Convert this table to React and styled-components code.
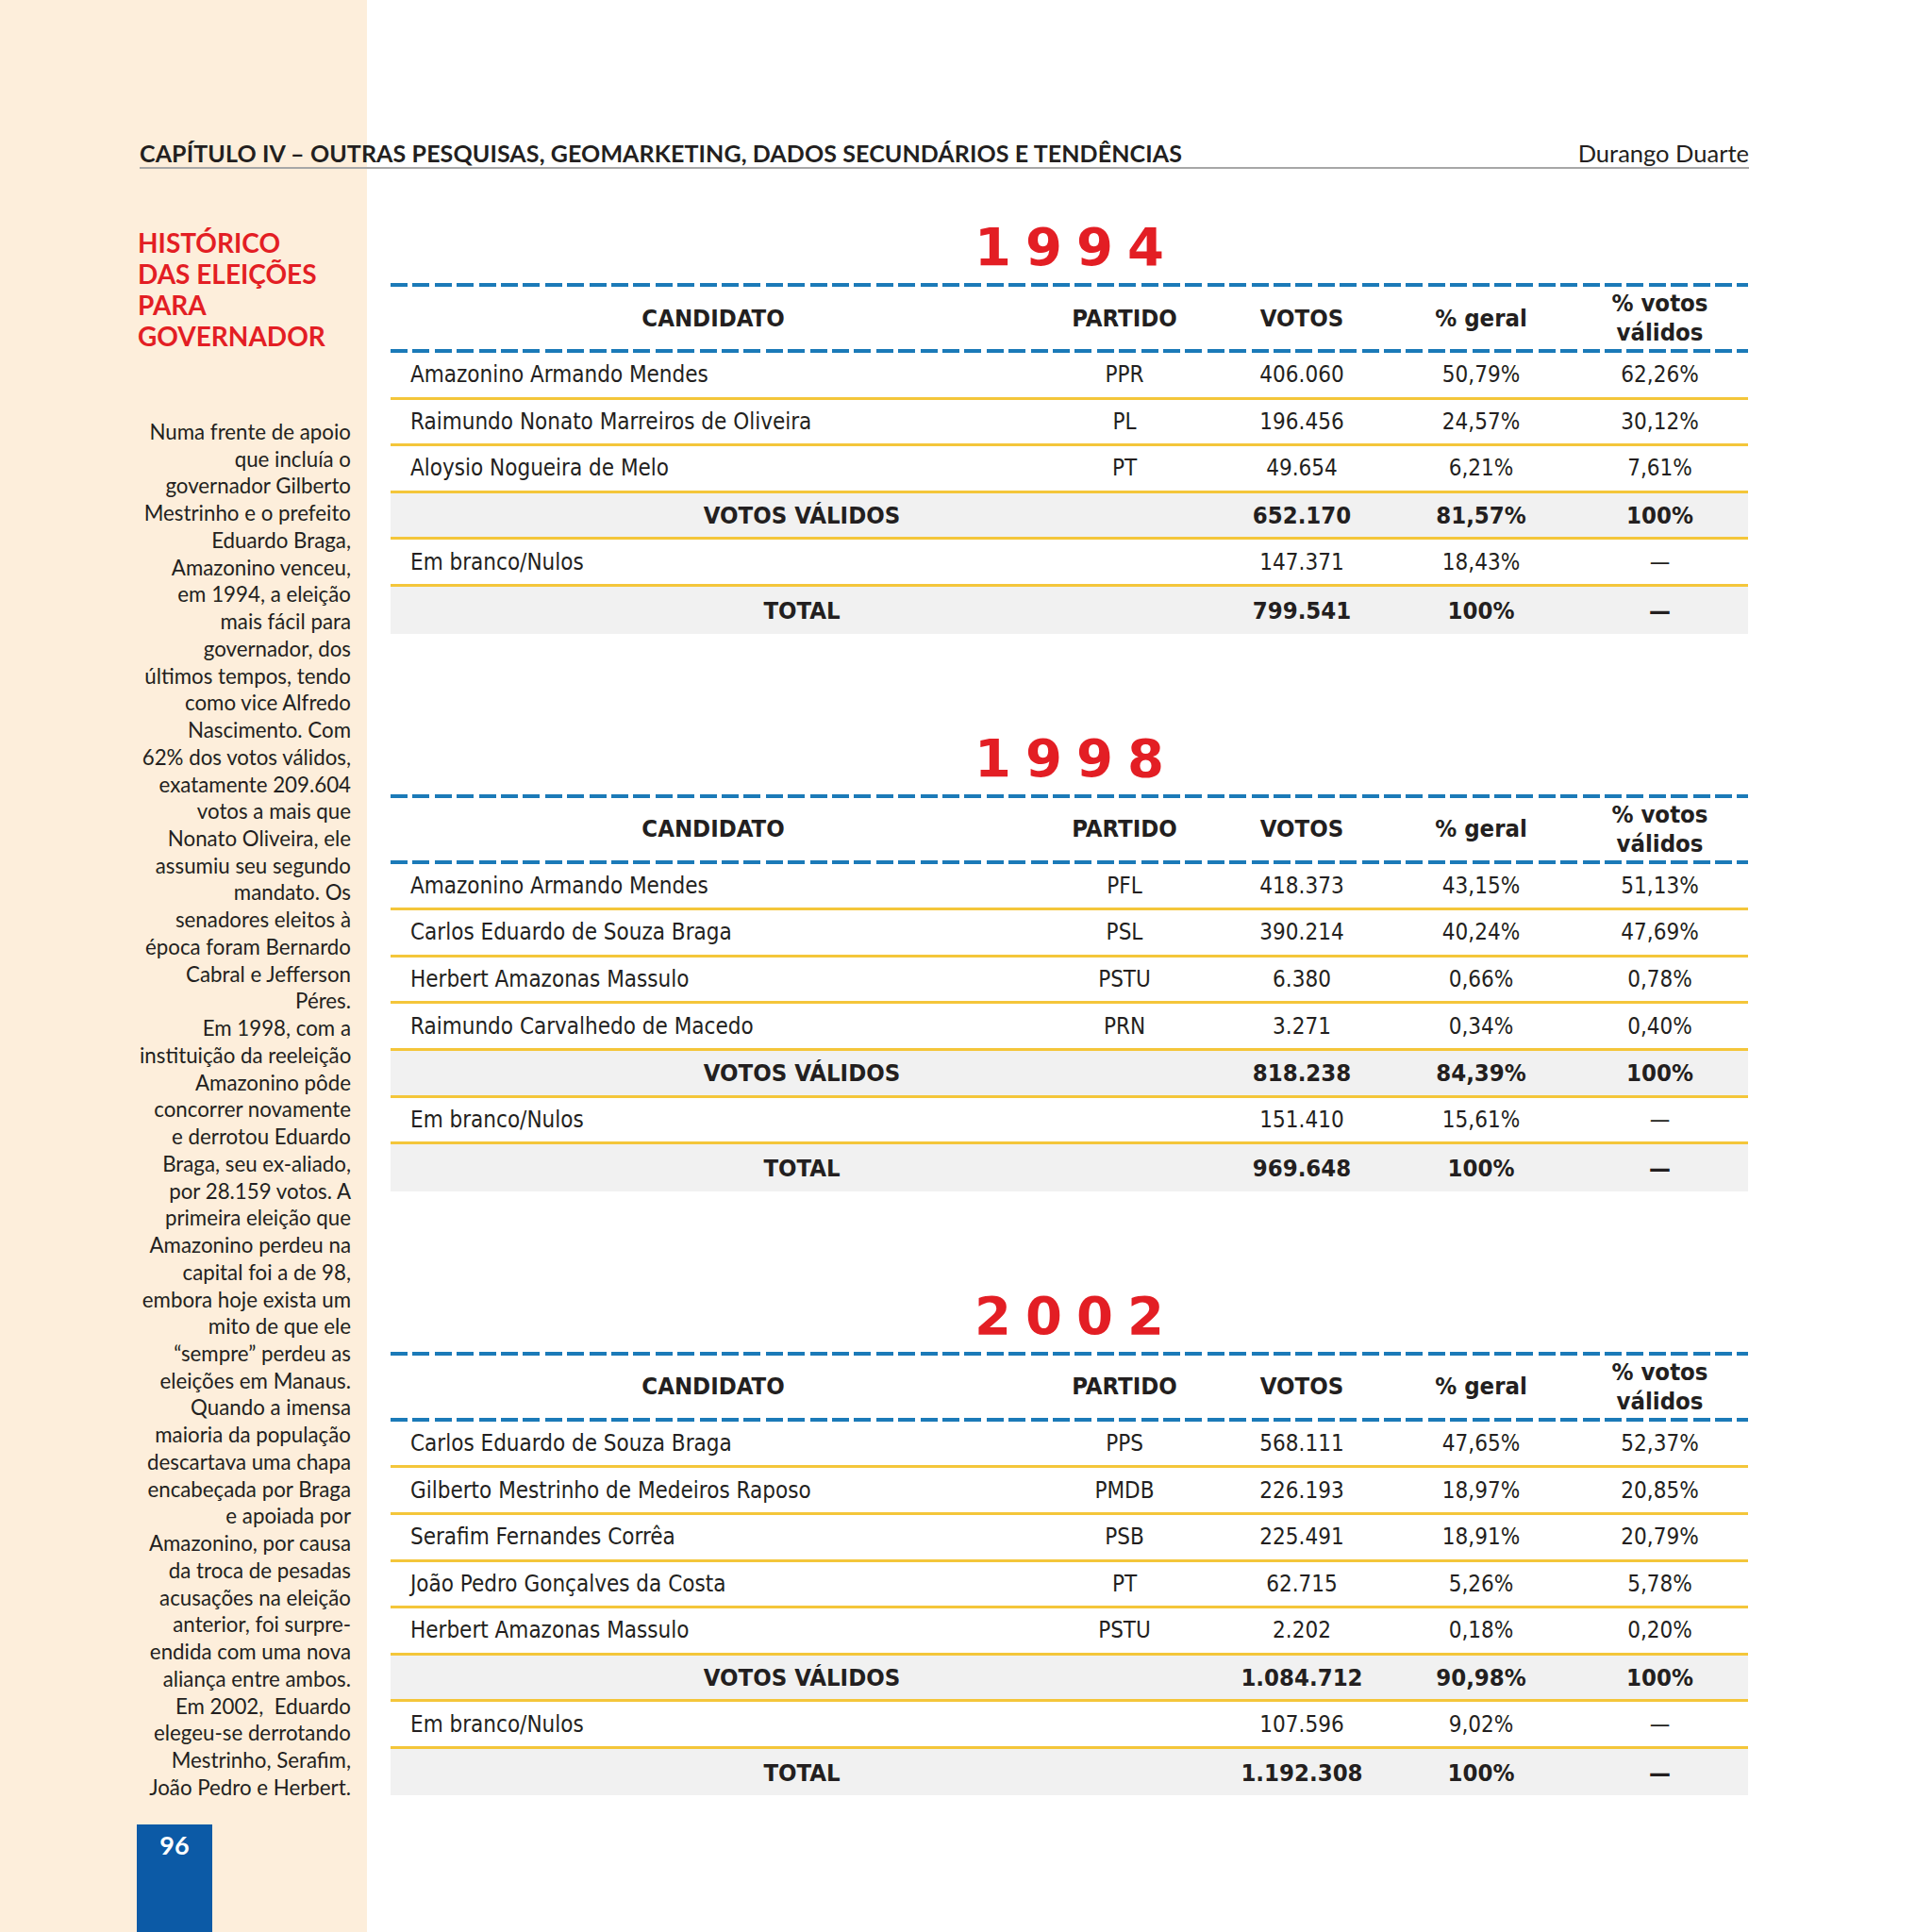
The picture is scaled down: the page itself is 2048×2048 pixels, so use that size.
import styled, { createGlobalStyle } from "styled-components";

const GlobalStyle = createGlobalStyle`
  html, body {
    margin: 0;
    padding: 0;
    background: #ffffff;
  }
  * {
    box-sizing: border-box;
  }
`;

const elections = [
  {
    year: "1994",
    candidates: [
      ["Amazonino Armando Mendes", "PPR", "406.060", "50,79%", "62,26%"],
      ["Raimundo Nonato Marreiros de Oliveira", "PL", "196.456", "24,57%", "30,12%"],
      ["Aloysio Nogueira de Melo", "PT", "49.654", "6,21%", "7,61%"],
    ],
    validos: ["652.170", "81,57%", "100%"],
    brancos: ["147.371", "18,43%"],
    total: ["799.541", "100%"],
  },
  {
    year: "1998",
    candidates: [
      ["Amazonino Armando Mendes", "PFL", "418.373", "43,15%", "51,13%"],
      ["Carlos Eduardo de Souza Braga", "PSL", "390.214", "40,24%", "47,69%"],
      ["Herbert Amazonas Massulo", "PSTU", "6.380", "0,66%", "0,78%"],
      ["Raimundo Carvalhedo de Macedo", "PRN", "3.271", "0,34%", "0,40%"],
    ],
    validos: ["818.238", "84,39%", "100%"],
    brancos: ["151.410", "15,61%"],
    total: ["969.648", "100%"],
  },
  {
    year: "2002",
    candidates: [
      ["Carlos Eduardo de Souza Braga", "PPS", "568.111", "47,65%", "52,37%"],
      ["Gilberto Mestrinho de Medeiros Raposo", "PMDB", "226.193", "18,97%", "20,85%"],
      ["Serafim Fernandes Corrêa", "PSB", "225.491", "18,91%", "20,79%"],
      ["João Pedro Gonçalves da Costa", "PT", "62.715", "5,26%", "5,78%"],
      ["Herbert Amazonas Massulo", "PSTU", "2.202", "0,18%", "0,20%"],
    ],
    validos: ["1.084.712", "90,98%", "100%"],
    brancos: ["107.596", "9,02%"],
    total: ["1.192.308", "100%"],
  },
];

const sideText = [
  "Numa frente de apoio",
  "que incluía o",
  "governador Gilberto",
  "Mestrinho e o prefeito",
  "Eduardo Braga,",
  "Amazonino venceu,",
  "em 1994, a eleição",
  "mais fácil para",
  "governador, dos",
  "últimos tempos, tendo",
  "como vice Alfredo",
  "Nascimento. Com",
  "62% dos votos válidos,",
  "exatamente 209.604",
  "votos a mais que",
  "Nonato Oliveira, ele",
  "assumiu seu segundo",
  "mandato. Os",
  "senadores eleitos à",
  "época foram Bernardo",
  "Cabral e Jefferson",
  "Péres.",
  "Em 1998, com a",
  "instituição da reeleição",
  "Amazonino pôde",
  "concorrer novamente",
  "e derrotou Eduardo",
  "Braga, seu ex-aliado,",
  "por 28.159 votos. A",
  "primeira eleição que",
  "Amazonino perdeu na",
  "capital foi a de 98,",
  "embora hoje exista um",
  "mito de que ele",
  "“sempre” perdeu as",
  "eleições em Manaus.",
  "Quando a imensa",
  "maioria da população",
  "descartava uma chapa",
  "encabeçada por Braga",
  "e apoiada por",
  "Amazonino, por causa",
  "da troca de pesadas",
  "acusações na eleição",
  "anterior, foi surpre-",
  "endida com uma nova",
  "aliança entre ambos.",
  "Em 2002,  Eduardo",
  "elegeu-se derrotando",
  "Mestrinho, Serafim,",
  "João Pedro e Herbert.",
];

const App = () => {
  return (
    <>
      <GlobalStyle />
      <Page>
        <Header>
          <ChapterTitle>
            CAPÍTULO IV – OUTRAS PESQUISAS, GEOMARKETING, DADOS SECUNDÁRIOS E TENDÊNCIAS
          </ChapterTitle>
          <Author>Durango Duarte</Author>
        </Header>
        <Body>
          <Sidebar>
            <SideHeading>
              HISTÓRICO
              <br />
              DAS ELEIÇÕES
              <br />
              PARA
              <br />
              GOVERNADOR
            </SideHeading>
            <SideText>
              {sideText.map((line, i) => (
                <SideLine key={i}>{line}</SideLine>
              ))}
            </SideText>
            <PageNumber>96</PageNumber>
          </Sidebar>
          <Tables>
            {elections.map((e) => (
              <Section key={e.year}>
                <Year>{e.year}</Year>
                <Table>
                  <Dashed />
                  <HeadRow>
                    <Cell>CANDIDATO</Cell>
                    <Cell>PARTIDO</Cell>
                    <Cell>VOTOS</Cell>
                    <Cell>% geral</Cell>
                    <Cell>
                      % votos
                      <br />
                      válidos
                    </Cell>
                  </HeadRow>
                  <Dashed />
                  {e.candidates.map(([name, party, votes, geral, validos]) => (
                    <Row key={name}>
                      <NameCell>{name}</NameCell>
                      <Cell>{party}</Cell>
                      <Cell>{votes}</Cell>
                      <Cell>{geral}</Cell>
                      <Cell>{validos}</Cell>
                    </Row>
                  ))}
                  <Row $shaded $bold>
                    <SpanCell>VOTOS VÁLIDOS</SpanCell>
                    <Cell>{e.validos[0]}</Cell>
                    <Cell>{e.validos[1]}</Cell>
                    <Cell>{e.validos[2]}</Cell>
                  </Row>
                  <Row>
                    <NameCell>Em branco/Nulos</NameCell>
                    <Cell />
                    <Cell>{e.brancos[0]}</Cell>
                    <Cell>{e.brancos[1]}</Cell>
                    <Cell>—</Cell>
                  </Row>
                  <Row $shaded $bold $last>
                    <SpanCell>TOTAL</SpanCell>
                    <Cell>{e.total[0]}</Cell>
                    <Cell>{e.total[1]}</Cell>
                    <Cell>—</Cell>
                  </Row>
                </Table>
              </Section>
            ))}
          </Tables>
        </Body>
      </Page>
    </>
  );
};

export default App;

const Page = styled.div`
  width: 2048px;
  height: 2048px;
  overflow: hidden;
  display: flex;
  flex-direction: column;
  padding: 147px 0 0 148px;
  background: linear-gradient(to right, #fdeedb 0 389px, #ffffff 389px);
  color: #231f20;
`;

const Header = styled.header`
  width: 1706px;
  height: 32px;
  display: flex;
  justify-content: space-between;
  align-items: flex-end;
  border-bottom: 2px solid #a7a7a7;
  font-family: Lato, "Open Sans", sans-serif;
  font-size: 25px;
  line-height: 30px;
`;

const ChapterTitle = styled.div`
  font-weight: 700;
  letter-spacing: 0.1px;
`;

const Author = styled.div`
  font-weight: 400;
  font-size: 25.5px;
`;

const Body = styled.div`
  flex: 1;
  display: flex;
  gap: 42px;
`;

const Sidebar = styled.aside`
  width: 224px;
  display: flex;
  flex-direction: column;
  font-family: Lato, "Open Sans", sans-serif;
`;

const SideHeading = styled.h2`
  margin: 62px 0 0 -2px;
  color: #e31e24;
  font-size: 28px;
  line-height: 33px;
  font-weight: 700;
  letter-spacing: 0;
`;

const SideText = styled.div`
  margin-top: 71px;
  font-size: 22.3px;
  line-height: 28.73px;
  text-align: right;
  color: #231f20;
`;

const SideLine = styled.div`
  white-space: pre;
`;

const PageNumber = styled.div`
  flex: 1;
  width: 80px;
  margin: 25px 0 0 -3px;
  background: #0c5aa6;
  color: #ffffff;
  font-size: 27px;
  font-weight: 700;
  text-align: center;
  padding-top: 6px;
  line-height: 32px;
`;

const Tables = styled.main`
  width: 1439px;
  display: flex;
  flex-direction: column;
  padding-top: 53px;
  gap: 102px;
`;

const Section = styled.section`
  display: flex;
  flex-direction: column;
`;

const Year = styled.div`
  height: 60px;
  margin-bottom: 8px;
  font-family: "DejaVu Sans", Verdana, sans-serif;
  font-weight: 700;
  font-size: 56px;
  line-height: 60px;
  letter-spacing: 15px;
  padding-left: 15px;
  text-align: center;
  color: #e31e24;
`;

const Table = styled.div`
  display: flex;
  flex-direction: column;
  font-family: "DejaVu Sans Condensed", "DejaVu Sans", sans-serif;
  font-size: 24px;
`;

const Dashed = styled.div`
  height: 4px;
  background: repeating-linear-gradient(
    to right,
    #1b7ab8 0 18px,
    transparent 18px 23.4px
  );
`;

const columns = "684px 188px 188px 192px 187px";

const HeadRow = styled.div`
  display: grid;
  grid-template-columns: ${columns};
  align-items: center;
  height: 66px;
  font-weight: 700;
  font-size: 25.5px;
  line-height: 31px;
`;

const Row = styled.div`
  display: grid;
  grid-template-columns: ${columns};
  align-items: center;
  height: 49.6px;
  background: ${(p) => (p.$shaded ? "#f1f1f1" : "transparent")};
  border-bottom: ${(p) => (p.$last ? "none" : "3px solid #f4c63a")};
  font-weight: ${(p) => (p.$bold ? 700 : 400)};
  font-size: ${(p) => (p.$bold ? "25.5px" : "24px")};
`;

const Cell = styled.div`
  text-align: center;
`;

const NameCell = styled.div`
  text-align: left;
  padding-left: 21px;
`;

const SpanCell = styled.div`
  grid-column: span 2;
  text-align: center;
`;
